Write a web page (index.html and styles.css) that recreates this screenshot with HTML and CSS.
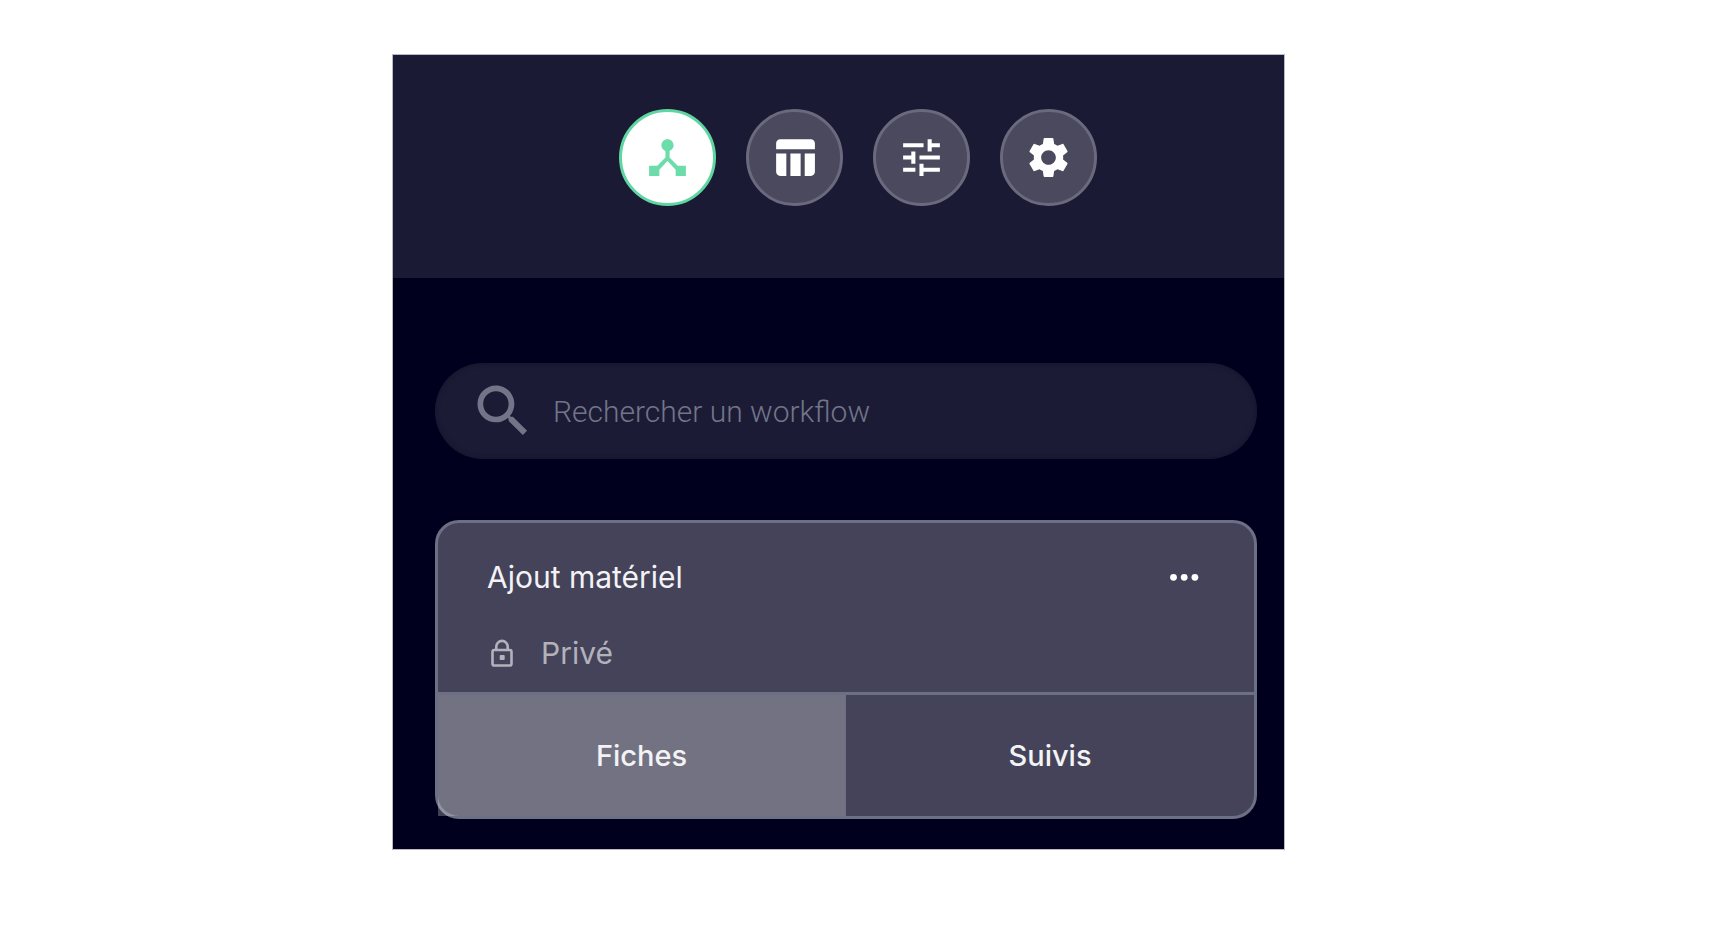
FILE: index.html
```html
<!DOCTYPE html>
<html lang="fr">
<head>
<meta charset="utf-8">
<meta name="viewport" content="width=device-width, initial-scale=1">
<title>Workflows</title>
<link rel="stylesheet" href="styles.css">
</head>
<body>
<main class="panel">
  <header class="panel-header">
    <nav class="nav" aria-label="Navigation">
      <button class="nav-button nav-button-active" type="button" aria-label="Workflows">
        <svg class="nav-icon" viewBox="0 0 24 24"><path d="M17 16l-4-4V8.82C14.16 8.4 15 7.3 15 6c0-1.66-1.34-3-3-3S9 4.34 9 6c0 1.3.84 2.4 2 2.82V12l-4 4H3v5h5v-3.05l4-4.2 4 4.2V21h5v-5h-4z"/></svg>
      </button>
      <button class="nav-button" type="button" aria-label="Tableaux">
        <svg class="nav-icon" viewBox="0 0 24 24"><path d="M10 10.02h5V21h-5zM17 21h3c1.1 0 2-.9 2-2v-9h-5v11zm3-18H5c-1.1 0-2 .9-2 2v3h19V5c0-1.1-.9-2-2-2zM3 19c0 1.1.9 2 2 2h3V10H3v9z"/></svg>
      </button>
      <button class="nav-button" type="button" aria-label="Filtres">
        <svg class="nav-icon" viewBox="0 0 24 24"><path d="M3 17v2h6v-2H3zM3 5v2h10V5H3zm10 16v-2h8v-2h-8v-2h-2v6h2zM7 9v2H3v2h4v2h2V9H7zm14 4v-2H11v2h10zm-6-4h2V7h4V5h-4V3h-2v6z"/></svg>
      </button>
      <button class="nav-button" type="button" aria-label="Paramètres">
        <svg class="nav-icon" viewBox="0 0 24 24"><path d="M19.14 12.94c.04-.3.06-.61.06-.94 0-.32-.02-.64-.07-.94l2.03-1.58c.18-.14.23-.41.12-.61l-1.92-3.32c-.12-.22-.37-.29-.59-.22l-2.39.96c-.5-.38-1.03-.7-1.62-.94l-.36-2.54c-.04-.24-.24-.41-.48-.41h-3.84c-.24 0-.43.17-.47.41l-.36 2.54c-.59.24-1.13.57-1.62.94l-2.39-.96c-.22-.08-.47 0-.59.22L2.74 8.87c-.12.21-.08.47.12.61l2.03 1.58c-.05.3-.09.63-.09.94s.02.64.07.94l-2.03 1.58c-.18.14-.23.41-.12.61l1.92 3.32c.12.22.37.29.59.22l2.39-.96c.5.38 1.03.7 1.62.94l.36 2.54c.05.24.24.41.48.41h3.84c.24 0 .44-.17.47-.41l.36-2.54c.59-.24 1.13-.56 1.62-.94l2.39.96c.22.08.47 0 .59-.22l1.92-3.32c.12-.22.07-.47-.12-.61l-2.01-1.58zM12 15.6c-1.98 0-3.6-1.62-3.6-3.6s1.62-3.6 3.6-3.6 3.6 1.62 3.6 3.6-1.62 3.6-3.6 3.6z"/></svg>
      </button>
    </nav>
  </header>
  <div class="content">
    <label class="search">
      <svg class="search-icon" viewBox="0 0 24 24" aria-hidden="true"><path d="M15.5 14h-.79l-.28-.27C15.41 12.59 16 11.11 16 9.5 16 5.91 13.09 3 9.5 3S3 5.91 3 9.5 5.91 16 9.5 16c1.61 0 3.09-.59 4.23-1.57l.27.28v.79l5 4.99L20.49 19l-4.99-5zm-6 0C7.01 14 5 11.99 5 9.5S7.01 5 9.5 5 14 7.01 14 9.5 11.99 14 9.5 14z"/></svg>
      <input class="search-input" type="search" placeholder="Rechercher un workflow" aria-label="Rechercher un workflow">
    </label>
    <article class="card">
      <div class="card-body">
        <div class="card-top">
          <h2 class="card-title">Ajout matériel</h2>
          <button class="more" type="button" aria-label="Plus d'options">
            <svg class="more-icon" viewBox="0 0 30 8"><circle cx="4.5" cy="4.3" r="3.4"/><circle cx="15.2" cy="4.3" r="3.4"/><circle cx="25.9" cy="4.3" r="3.4"/></svg>
          </button>
        </div>
        <div class="privacy">
          <svg class="lock-icon" viewBox="0 0 22 28" aria-hidden="true"><rect x="1.5" y="11" width="19" height="15.5" rx="1.8"/><path d="M5.3 11V7.6a5.7 5.7 0 0 1 11.4 0V11"/><rect class="keyhole" x="8.7" y="16" width="5" height="5" rx="1"/></svg>
          <span>Privé</span>
        </div>
      </div>
      <div class="tabs">
        <button class="tab tab-active" type="button">Fiches</button>
        <button class="tab" type="button">Suivis</button>
      </div>
    </article>
  </div>
</main>
</body>
</html>
```
FILE: styles.css
```css
* { box-sizing: border-box; }

body {
  margin: 0;
  padding: 54px 0;
  display: grid;
  grid-template-columns: 392fr 893fr 439fr;
  background: #fff;
  font-family: Inter, "Liberation Sans", sans-serif;
  font-size: 30px;
  line-height: 36px;
  color: #f3f3f6;
}

button {
  margin: 0;
  padding: 0;
  border: 0;
  background: none;
  font: inherit;
  color: inherit;
  cursor: pointer;
}

svg { display: block; fill: currentColor; }

.panel {
  grid-column: 2;
  border: 1px solid #b9bac6;
  background: #00001e;
}

.panel-header {
  padding: 54px 0 72px 39px;
  background: #1b1a35;
}

.nav {
  display: flex;
  justify-content: center;
  gap: 30px;
}

.nav-button {
  display: grid;
  place-items: center;
  width: 97px;
  height: 97px;
  border: 3px solid #6b697d;
  border-radius: 50%;
  background: #4a495d;
  color: #fff;
}

.nav-button-active {
  border-color: #5fd6a2;
  background: #fff;
  color: #6cdcab;
}

.nav-icon { width: 49px; height: 49px; }

.content { padding: 85px 27px 30px 42px; }

.search {
  display: flex;
  align-items: center;
  gap: 16px;
  height: 96px;
  padding: 0 34px;
  border-radius: 48px;
  background: #1c1b36;
  box-shadow: inset 0 0 4px 1px #14152a;
  color: #727588;
}

.search-icon { flex: none; width: 68px; height: 68px; }

.search-input {
  flex: 1;
  min-width: 0;
  padding: 2px 0 0;
  border: 0;
  outline: 0;
  background: none;
  font: 300 30px/36px Roboto, sans-serif;
  color: #fff;
}

.search-input::placeholder { color: #727588; opacity: 1; }

.card {
  margin-top: 61px;
  border: 3px solid #6c7085;
  border-radius: 24px;
  background: #444359;
}

.card-body {
  padding: 36px 55px 21px 49px;
  border-bottom: 3px solid #6c7085;
}

.card-top {
  display: flex;
  align-items: center;
  justify-content: space-between;
}

.card-title {
  margin: 0;
  font-size: 30px;
  font-weight: 400;
}

.more { color: #fff; }

.more-icon { width: 30px; height: 8px; }

.privacy {
  display: flex;
  align-items: center;
  gap: 28px;
  margin-top: 40px;
  padding-left: 4px;
  color: #b2b2bd;
}

.lock-icon {
  width: 22px;
  height: 28px;
  fill: none;
  stroke: currentColor;
  stroke-width: 2.6;
}

.keyhole { fill: currentColor; stroke: none; }

.tabs {
  display: grid;
  grid-template-columns: 1fr 1fr;
}

.tab {
  height: 121px;
  font-size: 29px;
  font-weight: 500;
}

.tab-active {
  border-right: 1px solid #6c7085;
  background: rgba(255, 255, 255, 0.25);
}
```
